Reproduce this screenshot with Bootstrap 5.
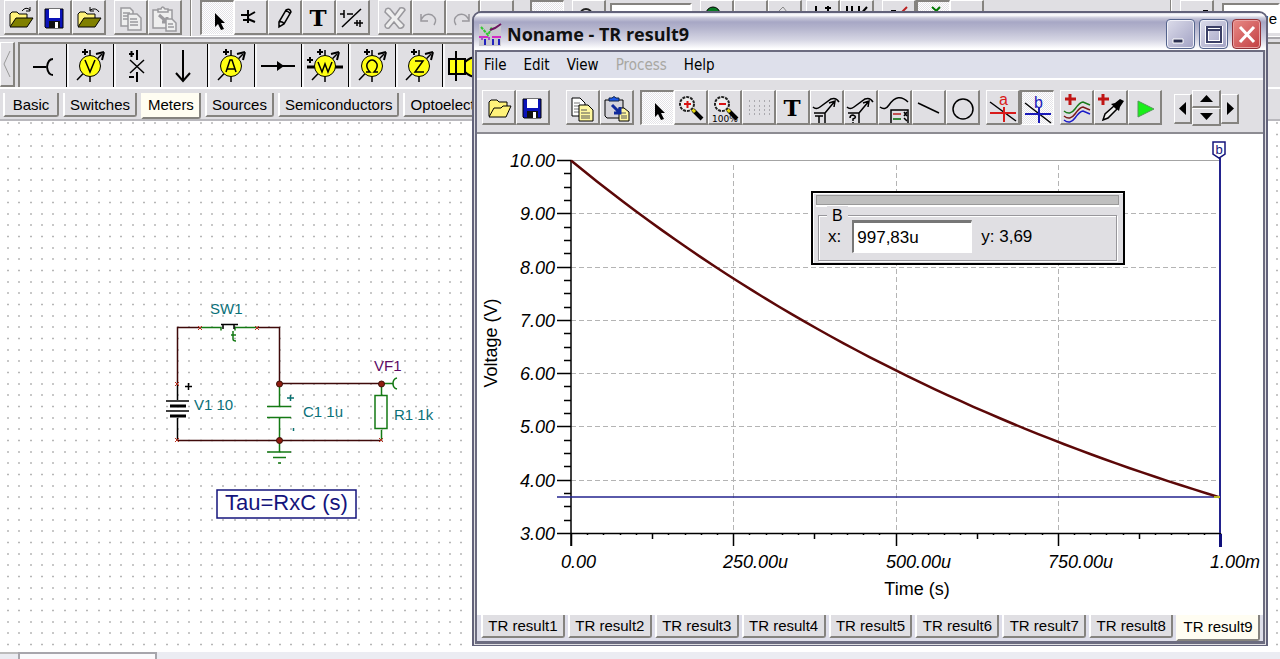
<!DOCTYPE html>
<html lang="en">
<head>
<meta charset="utf-8">
<meta name="viewport" content="width=device-width, initial-scale=1">
<title>Noname - TR result9</title>
<link href="https://cdn.jsdelivr.net/npm/bootstrap@5.3.0/dist/css/bootstrap.min.css" rel="stylesheet">
<script src="https://cdn.jsdelivr.net/npm/bootstrap@5.3.0/dist/js/bootstrap.bundle.min.js" defer></script>
<style>
:root{--face:#e0dfe3;--shade:#85837f;--ui:"Liberation Sans",Arial,sans-serif}
body{font-family:var(--ui);font-size:15px;line-height:18px;color:#000;background:#fff}
button{font:inherit;color:inherit}
svg{display:block;flex-shrink:0}
.desk{background:var(--face)}
.tool{width:34px;height:35px;padding:0;border:1px solid #fff;border-right:2px solid var(--shade);border-bottom:2px solid var(--shade);background:var(--face);overflow:hidden;flex-shrink:0}
.tool svg{width:30px;height:31px}
.tool:disabled{opacity:1}
.tool.pressed{border:1px solid #fff;border-top:2px solid var(--shade);border-left:2px solid var(--shade);background:repeating-conic-gradient(#fff 0 25%,#e4e3e7 0 50%) 0 0/2px 2px}
.toolbar-main{height:37px;padding:0 0 0 4px;border-bottom:1px solid #fff}
.sep{width:2px;background:#fff;border-left:1px solid var(--shade)}
.toolfield{height:30px;border:2px solid var(--shade);border-right-color:#fff;border-bottom-color:#fff;background:#fff;border-radius:0;margin-top:3px;font-size:15px;padding:0 1px 0 4px}
.palette{height:52px;padding-top:3px;border-top:2px solid #aaa9ae;border-bottom:2px solid #fff}
.scroller{width:15px;height:45px;padding:0;border:1px solid #fff;border-right:2px solid var(--shade);border-bottom:2px solid var(--shade);background:var(--face)}
.parts{margin-left:3px;border-top:2px solid var(--shade);border-left:2px solid var(--shade);height:45px;overflow:hidden}
.part{width:47px;padding:0;border:0;border-right:1px solid #000;border-left:2px solid #f7f7f9;background:var(--face);overflow:hidden;flex-shrink:0}
.part.pressed{border-left-color:var(--face)}
.part svg{width:44px;height:44px}
.tabrow{height:32px;padding:4px 0 0 3px;gap:4px;border-bottom:2px solid #b9b8bd}
.tab{border:0;border-left:2px solid #fff;border-right:2px solid var(--shade);border-bottom:2px solid var(--shade);border-radius:0 0 3px 1px;background:var(--face);padding:2px 5px 0;height:24px;min-width:56px;text-align:center;white-space:nowrap;line-height:20px}
.tab.active{background:#fffdf2;border-left-color:#fffdf2;height:26px;padding-top:0}
.sheet{background:#fff}
.statusbar{height:7px;background:#ebecf2}
.stat-a{width:18px;border-top:2px solid #bbb}
.stat-b{width:139px;border:2px solid #a7a6ac;border-bottom:0;background:#fafafc}
.win{left:472px;right:12px;top:11px;bottom:13px;background:var(--face);border:2px solid #62627a;border-bottom-width:1px;border-radius:9px 9px 0 0;overflow:hidden}
.titlebar{height:37px;padding:6px 5px 0 5px;background:linear-gradient(#dcdce8 0,#fff 2px,#c8c8da 5px,#a7a7c5 9px,#b4b4cd 15px,#d6d6e4 27px,#fff 36px)}
.titlebar h1{font:bold 18px/24px "Open Sans",sans-serif;margin:3px 0 0;color:#111}
.cap{width:29px;height:30px;padding:0;border:1px solid #53638c;border-radius:4px;background:linear-gradient(135deg,#dcdcea,#a2a2c4);box-shadow:inset 0 0 0 1px #f0f0f8}
.cap.x{background:linear-gradient(135deg,#e88a86,#c33f42);border-color:#913036;box-shadow:inset 0 0 0 1px #e9a3a3}
.inner{margin:0 1px 1px;border:2px solid #6c6c80;border-bottom-width:3px}
.menus{height:28px;background:#dee0eb;padding:4px 7px 0;gap:17px;border-bottom:2px solid #fff}
.menus a{font:15px/18px "DejaVu Sans Condensed","DejaVu Sans",sans-serif;color:#000;text-decoration:none}
.menus a.disabled{color:#a8a7a2}
.wintools{height:54px;padding:10px 0 0 5px;border-bottom:2px solid #8d8c92}
.group-end{margin-right:6px}
.nudge{width:18px;height:30px;margin-top:4px}
.nudge.first{margin-left:12px}
.nudge svg{width:15px;height:27px}
.spin{width:29px;height:18px}
.spin svg{width:26px;height:15px}
.plot{background:#fff}
.readout{left:42.5%;top:57px;width:314px;height:74px;background:var(--face);border:2px solid #000;box-shadow:inset 1px 1px #fff;padding:2px 3px}
.grip{height:10px;background:#bfbfbf;border:1px solid #999;box-shadow:0 2px #fff;margin-right:1px}
.readout fieldset{border:1px solid #98979c;box-shadow:1px 1px #fff,inset 1px 1px #fff;margin:10px 3px 0 2px;height:46px;padding:0 0 0 9px}
.readout legend{float:none;width:auto;position:absolute;left:14px;top:13px;font-size:16px;line-height:20px;padding:0 5px;margin:0;background:var(--face)}
.readout input{width:120px;height:33px;border:1px solid #fff;border-top:3px solid #777;border-left:2px solid #777;border-radius:0;padding:0 3px;font-size:17px;margin:0 9px 0 11px;background:#fff}
.readout label,.readout output{font-size:17px}
.restabs{height:26px;background:#dedeea;padding:0 3px 0 4px;gap:3px}
.restabs .tab{border-top:0;padding:1px 2px 0;height:23px}
.restabs .tab.active{height:26px;padding-top:0}
.lbl{font:18px var(--ui)}
.tiny{font:9px "DejaVu Sans",sans-serif}
</style>
</head>
<body>
<svg width="0" height="0" class="position-absolute" aria-hidden="true">
 <defs>
  <symbol id="disk" viewBox="0 0 30 31"><path d="M6 7h18v19H7l-1-1z" fill="#0a12b8" stroke="#000"/><path d="M10 7h11v9H10z" fill="#fff"/><path d="M10 19h11v7H10z" fill="#111"/><path d="M16 20h3v6h-3z" fill="#fff"/></symbol>
  <symbol id="ptr" viewBox="0 0 30 31"><path d="M13 10v14l3-3 3 6 3-1-3-6h4z" fill="#000"/></symbol>
  <symbol id="tee" viewBox="0 0 30 31"><text x="15" y="24" text-anchor="middle" font-family="DejaVu Serif" font-weight="bold" font-size="23">T</text></symbol>
  <symbol id="folder" viewBox="0 0 30 31"><path d="M5 24V12l2-2h5l2 2h8v4" fill="#fff27a" stroke="#000"/><path d="M5 25l6-9h17l-6 9z" fill="#808000" stroke="#000"/></symbol>
  <symbol id="meter" viewBox="0 0 44 44"><path d="M21 6v32M8 36L33 10" stroke="#000" stroke-width="1.500"/><path d="M35 8l-2 8M35 8l-8 2M13 8h6M16 5v6" stroke="#000" stroke-width="2" fill="none"/><circle cx="21" cy="22" r="10.500" fill="#ffff12" stroke="#000"/></symbol>
  <symbol id="mag" viewBox="0 0 30 31"><path d="M18 18l9 9" stroke="#000" stroke-width="4"/><path d="M17 17l3 3" stroke="#e7d80f" stroke-width="3"/><circle cx="12" cy="12" r="7" fill="#eee" stroke="#222" stroke-width="2" stroke-dasharray="3 1"/></symbol>
  <pattern id="dots" width="34" height="34" x="7" y="122" patternUnits="userSpaceOnUse"><path d="M0 1h2m9 0h2m10 0h2M0 12.500h2m9 0h2m10 0h2M0 24h2m9 0h2m10 0h2" stroke="#b6b6b6" stroke-width="1.500"/></pattern>
 </defs>
</svg>

<main class="desk vh-100 d-flex flex-column position-relative overflow-hidden">
 <div class="toolbar-main d-flex" role="toolbar" aria-label="Main tools">
  <button class="tool" aria-label="Open"><svg><use href="#folder"/><path d="M17 9q4-5 8-1m0-3v4h-4" fill="none" stroke="#000"/></svg></button>
  <button class="tool" aria-label="Save"><svg><use href="#disk"/></svg></button>
  <button class="tool me-2" aria-label="Open from web"><svg><use href="#folder"/><path d="M26 10q-3-5-9-2m0-3v4h4" fill="none" stroke="#000"/></svg></button>
  <button class="tool" disabled aria-label="Copy"><svg fill="#eee" stroke="#9b9a9e" stroke-width="1.500"><path d="M6 6h9l3 3v15H6z"/><path d="M8 11h7M8 14h5M8 17h5"/><path d="M13 12h9l4 4v12H13z"/><path d="M15 17h7M15 20h8M15 23h8"/></svg></button>
  <button class="tool" disabled aria-label="Paste"><svg fill="#eee" stroke="#9b9a9e" stroke-width="1.500"><path d="M4 8h19v18H4z"/><path d="M9 10V7h3q1-4 4 0h3v3z"/><path d="M10 13l8 7m0-5v5h-5" stroke-width="3"/><path d="M17 17h6l4 4v8H17z"/><path d="M19 22h5M19 25h6"/></svg></button>
  <div class="sep ms-2 me-1"></div>
  <button class="tool pressed ms-1" aria-label="Select"><svg><use href="#ptr"/></svg></button>
  <button class="tool" aria-label="Last component"><svg fill="none" stroke="#000" stroke-width="2"><path d="M6 13h6M8 18h4M13 8v13M13 14l7-4M13 17l7 3"/></svg></button>
  <button class="tool" aria-label="Wire"><svg fill="none" stroke="#000" stroke-width="1.500"><path d="M10 20l7-12q4-2 5 2l-7 12-5 3zM10 20q4-1 5 2M16 9q4 0 5 3"/></svg></button>
  <button class="tool" aria-label="Text"><svg><use href="#tee"/></svg></button>
  <button class="tool me-2" aria-label="Interactive"><svg fill="none" stroke="#000" stroke-width="1.500"><path d="M3 12h4M7 8v8M5 25L24 7M10 12h6M17 21h9M20 18v6M23 18v7"/></svg></button>
  <button class="tool" disabled aria-label="Delete"><svg fill="#eee" stroke="#99989d" stroke-width="1.500"><path d="M7 7q3-2 5 1l4 5 5-7q4-1 5 2l-7 9 6 6q-1 4-5 3l-5-6-5 6q-4 1-4-3l6-7-6-6z"/></svg></button>
  <button class="tool" disabled aria-label="Undo"><svg fill="none" stroke="#99989d" stroke-width="1.500"><path d="M8 18q4-8 11-5 6 4 2 10M8 12v7h7"/></svg></button>
  <button class="tool" disabled aria-label="Redo"><svg fill="none" stroke="#99989d" stroke-width="1.500"><path d="M22 18q-4-8-11-5-6 4-2 10M22 12v7h-7"/></svg></button>
  <button class="tool" aria-label="Zoom"></button>
  <button class="tool pressed ms-3" aria-label="Grid"></button>
  <button class="tool ms-2" aria-label="Find"><svg><circle cx="13" cy="13" r="6" fill="none" stroke="#222" stroke-width="2"/></svg></button>
  <input class="toolfield ms-1" style="width:82px" aria-label="Zoom level">
  <button class="tool ms-2" aria-label="Run"><svg><circle cx="12" cy="12" r="7" fill="#087b22" stroke="#000"/></svg></button>
  <button class="tool" aria-label="Run options"></button>
  <button class="tool" aria-label="Probe"><svg fill="none" stroke="#888"><path d="M9 10l5-5 4 5"/></svg></button>
  <button class="tool ms-1" aria-label="Transient"><svg stroke="#000" stroke-width="2" fill="none"><path d="M9 4v12M18 6h6M21 4v12"/></svg></button>
  <button class="tool" aria-label="Digital"><svg stroke="#000" stroke-width="2" fill="none"><path d="M6 14V4M11 14V4M18 4v10l8-9"/></svg></button>
  <button class="tool ms-2" aria-label="Marker"><svg fill="none" stroke="#b22" stroke-width="2"><path d="M17 12l7-7"/><path d="M8 9h5" stroke="#000"/></svg></button>
  <button class="tool pressed" aria-label="Highlight"><svg fill="none" stroke="#070" stroke-width="2"><path d="M14 4l9 8M22 4l-8 8"/></svg></button>
  <button class="tool" aria-label="Options"></button>
  <div class="sep ms-auto me-2"></div>
  <button class="tool me-2" aria-label="Page"><svg><path d="M22 8h5v4h-5z"/></svg></button>
  <input class="toolfield text-end" style="width:58px" value="ge" aria-label="Page name">
 </div>

 <div class="palette d-flex" role="toolbar" aria-label="Meters">
  <button class="scroller" aria-label="Scroll left"><svg width="12" height="42" fill="none" stroke="#999"><path d="M9 8L3 21l6 13"/></svg></button>
  <div class="parts d-flex flex-grow-1">
   <button class="part pressed" aria-label="Voltage pin"><svg fill="none" stroke="#000" stroke-width="2"><path d="M11 23h13M31 15q-5 0-6 8 1 8 6 8"/></svg></button>
   <button class="part" aria-label="Voltmeter"><svg><use href="#meter"/><path d="M16 16l5 12 5-12" fill="none" stroke="#000" stroke-width="1.500"/></svg></button>
   <button class="part" aria-label="Open circuit meter"><svg stroke="#000" stroke-width="2"><path d="M21 6v10M21 28v10M13 10h5M15.500 7v6M13 33h5"/><path d="M14 16l14 13M28 16L14 29" stroke-width="1.500"/></svg></button>
   <button class="part" aria-label="Voltage arrow"><svg fill="none" stroke="#000" stroke-width="2"><path d="M20 6v31M13 29l7 8 7-8"/></svg></button>
   <button class="part" aria-label="Ammeter"><svg><use href="#meter"/><path d="M16 28l4-12h2l4 12M17 25h8" fill="none" stroke="#000" stroke-width="1.500"/></svg></button>
   <button class="part" aria-label="Current arrow"><svg><path d="M4 22h34" stroke="#000" stroke-width="2"/><path d="M20 17l7 5-7 5z"/></svg></button>
   <button class="part" aria-label="Power meter"><svg><path d="M3 23h36" stroke="#000" stroke-width="3"/><path d="M3 16h6M6 13v6" stroke="#000" stroke-width="2"/><use href="#meter"/><path d="M14 18l4 10 3-8 3 8 4-10" fill="none" stroke="#000" stroke-width="1.500"/></svg></button>
   <button class="part" aria-label="Ohmmeter"><svg><use href="#meter"/><path d="M15 28h4q-4-4-3-8 2-4 5-4t5 4q1 4-3 8h4" fill="none" stroke="#000" stroke-width="1.500"/></svg></button>
   <button class="part" aria-label="Impedance meter"><svg><use href="#meter"/><path d="M17 17h8l-8 11h9" fill="none" stroke="#000" stroke-width="1.500"/></svg></button>
   <button class="part" aria-label="Speaker"><svg fill="#ffff12" stroke="#000" stroke-width="2"><path d="M11 7v30M4 15h16v15H4zM20 18q5-5 12-5v20q-7 0-12-5z"/></svg></button>
  </div>
 </div>

 <div class="tabrow d-flex" role="tablist" aria-label="Component groups">
  <button class="tab" role="tab">Basic</button><button class="tab" role="tab">Switches</button><button class="tab active" role="tab" aria-selected="true">Meters</button><button class="tab" role="tab">Sources</button><button class="tab" role="tab">Semiconductors</button><button class="tab" role="tab">Optoelectronics</button>
 </div>

 <section class="sheet flex-grow-1 overflow-hidden" aria-label="Schematic">
  <svg width="100%" height="100%" fill="none">
   <g transform="translate(0 -121)">
    <rect width="100%" height="100%" y="121" fill="url(#dots)"/>
    <g stroke="#3f0a0a" stroke-width="1.500"><path d="M177.500 383V327.500H200M257 327.500H279.500V384M279.500 383.500H381M177.500 440.500H381"/></g>
    <g stroke="#000" stroke-width="1.500"><path d="M177.500 384v16M166 401h23M166 411h23M177.500 418v22M185 386.500h7M188.500 383v7"/><path d="M170 406h16M170 416h16" stroke-width="3"/></g>
    <g stroke="#147a14" stroke-width="1.500"><path d="M201 327.500h20v3M257 327.500h-22v3M279.500 384v22M267 406.500h24M267 417.500h24M279.500 418v34M267 452h24M273 457.500h13M278 463h3M381.500 384v11M381.500 430v10M375 395.500h12v33h-12zM382 383.500h11M397 378q-4 1-4 5.500t4 5.500"/><path d="M233 331v8q0 2 3 2M231 335h5" stroke-width="1.500"/></g>
    <path d="M221 324.500h17M223 325v4M234 325v4" stroke="#000" stroke-width="1.500"/>
    <path d="M287 398h7M290.500 395v6M293.500 428v3" stroke="#087070" stroke-width="1.500"/>
    <g stroke="#b8301f"><path d="M198 326l4 4m0-4l-4 4M255 326l4 4m0-4l-4 4M175 382l4 4m0-4l-4 4M175 438l4 4m0-4l-4 4M379 438l4 4m0-4l-4 4"/></g>
    <g fill="#8f1c10" stroke="#3c1008"><circle cx="279.500" cy="384" r="3"/><circle cx="381.500" cy="384" r="3"/><circle cx="279.500" cy="440.500" r="3"/></g>
    <g fill="#0a7078" font-family="Liberation Sans" font-size="15"><text x="210" y="314">SW1</text><text x="194" y="410">V1 10</text><text x="303" y="417">C1 1u</text><text x="394" y="420">R1 1k</text><text x="374" y="371" fill="#5c0a64">VF1</text></g>
    <rect x="217" y="490" width="139" height="28" fill="#fff" stroke="#14147c" stroke-width="1.500"/>
    <text x="225" y="510" fill="#14147c" font-family="Liberation Sans" font-size="22">Tau=RxC (s)</text>
   </g>
  </svg>
 </section>
 <footer class="statusbar d-flex"><div class="stat-a"></div><div class="stat-b"></div></footer>

 <section class="win position-absolute d-flex flex-column" aria-label="Diagram window">
  <header class="titlebar d-flex">
   <svg width="24" height="24" class="me-1 mt-1" fill="none" stroke-width="2"><path d="M0 1h22v22H0z" fill="#c8c7ce"/><path d="M0 14h9M13 14h9" stroke="#d32ac4"/><path d="M2 4l7 8 4-8" stroke="#32c832" stroke-dasharray="3 1"/><path d="M11 7l5-2 6-4" stroke="#6d1460"/><path d="M6 16v6M14 16v6M20 16v6" stroke="#2222bd"/><path d="M3 14v3M10 14v3" stroke="#a44fd0"/></svg>
   <h1>Noname - TR result9</h1>
   <div class="ms-auto d-flex gap-1">
    <button class="cap" aria-label="Minimise"><svg width="27" height="28"><path d="M6 19h10v4H6z" fill="#2b2f50" stroke="#fff"/></svg></button>
    <button class="cap" aria-label="Maximise"><svg width="27" height="28" fill="none"><path d="M7 8h14v14H7z" stroke="#fff" stroke-width="4"/><path d="M7 7h14v15H7zM7 10h14" stroke="#3b3f66" stroke-width="2"/></svg></button>
    <button class="cap x" aria-label="Close"><svg width="27" height="28"><path d="M7 7l14 15M21 7L7 22" stroke="#fff" stroke-width="3"/></svg></button>
   </div>
  </header>
  <div class="inner flex-grow-1 d-flex flex-column overflow-hidden">
   <nav class="menus d-flex" aria-label="Menu"><a href="#">File</a><a href="#">Edit</a><a href="#">View</a><a href="#" class="disabled" aria-disabled="true">Process</a><a href="#">Help</a></nav>
   <div class="wintools d-flex" role="toolbar" aria-label="Diagram tools">
    <button class="tool" aria-label="Open"><svg fill="#fff27a" stroke="#000"><path d="M6 24V10l2-2h6l2 2h8v5"/><path d="M6 25l5-9h7l2-2h8l-5 11z"/></svg></button>
    <button class="tool me-3" aria-label="Save"><svg><use href="#disk"/></svg></button>
    <button class="tool" aria-label="Copy"><svg stroke="#000"><path d="M5 6h8l5 5v13H5z" fill="#fff"/><path d="M7 11h6M7 14h5M7 17h5M7 20h5" stroke="#777"/><path d="M12 13h9l5 5v11H12z" fill="#fff8a0"/><path d="M14 18h6M14 21h9M14 24h9M14 26h9" stroke="#555"/></svg></button>
    <button class="tool group-end" aria-label="Paste"><svg stroke="#000"><path d="M4 8h18v18H6l-2-2z" fill="#d4d3da"/><path d="M8 9V6h3q2-3 4 0h3v3z" fill="#1c58e8" stroke="#124"/><path d="M18 16h5l5 4v9H18z" fill="#fff8a0"/><path d="M20 21h5M20 24h6M20 26h6" stroke="#555"/><path d="M11 13l8 8m0-6v6h-6" stroke="#102a9c" stroke-width="3" fill="none"/></svg></button>
    <button class="tool pressed" aria-label="Select"><svg><use href="#ptr"/></svg></button>
    <button class="tool" aria-label="Zoom in"><svg><use href="#mag"/><path d="M9 12h7M12.500 9v7" stroke="#d81212" stroke-width="2"/></svg></button>
    <button class="tool" aria-label="Zoom 100%"><svg><use href="#mag" x="1"/><path d="M10 12h7" stroke="#d81212" stroke-width="2"/><text x="3" y="30" class="tiny">100%</text></svg></button>
    <button class="tool" aria-label="Grid"><svg stroke="#aaa9ae" stroke-width="2" stroke-dasharray="1 4"><path d="M6 9h21M6 14h21M6 18h21M6 22h21"/></svg></button>
    <button class="tool" aria-label="Text"><svg><use href="#tee"/></svg></button>
    <button class="tool" aria-label="Curve label"><svg fill="none" stroke="#000" stroke-width="1.500"><path d="M2 15q3 3 7 0L20 7q5-2 8 3M14 21l10-12m-6 2l6-2-1 6M3 21h11v10M4 24h8M8 24v7"/></svg></button>
    <button class="tool" aria-label="Curve query"><svg fill="none" stroke="#000" stroke-width="1.500"><path d="M2 15q3 3 7 0L20 7q5-2 8 3M14 21l10-12m-6 2l6-2-1 6M3 21h11v10M5 26q0-3 3-3 5 2 0 4v2M8 30v1"/></svg></button>
    <button class="tool" aria-label="Legend"><svg fill="none" stroke="#000" stroke-width="1.500"><path d="M1 15q5 4 9-2 9-13 19-3M12 31V18h17v13"/><path d="M14 22h8" stroke="#b22"/><path d="M14 27h8" stroke="#060"/><path d="M25 20l3 4m0-4l-3 4M25 26l3 3"/></svg></button>
    <button class="tool" aria-label="Line"><svg stroke="#000" stroke-width="1.500"><path d="M5 11l21 10"/></svg></button>
    <button class="tool group-end" aria-label="Ellipse"><svg fill="none" stroke="#000" stroke-width="1.500"><circle cx="16" cy="17" r="10"/></svg></button>
    <button class="tool" aria-label="Cursor a"><svg fill="none" stroke-width="2"><path d="M3 10l26 19" stroke="#000" stroke-width="1.500"/><path d="M3 21h26M17 15v15" stroke="#d81a1a"/><text x="12" y="13" font-size="16" fill="#d81a1a">a</text></svg></button>
    <button class="tool pressed group-end" aria-label="Cursor b"><svg fill="none" stroke-width="2"><path d="M3 10l26 20" stroke="#000" stroke-width="1.500"/><path d="M3 21h26M17 15v15" stroke="#1a1ab8"/><text x="12" y="15" font-size="16" fill="#1a1ab8">b</text></svg></button>
    <button class="tool" aria-label="Add curves"><svg fill="none" stroke-width="1.500"><path d="M4 7h11M9 2v11" stroke="#c01515" stroke-width="3"/><path d="M3 19q6 5 11-2t8-7l7 3" stroke="#1a7a1a"/><path d="M3 24q6 5 11-2t8-7l7 3" stroke="#7a1a1a"/><path d="M3 28q6 5 11-2t8-7l7 3" stroke="#1a1ac8"/></svg></button>
    <button class="tool" aria-label="Pick value"><svg><path d="M3 7h11M8 2v11" stroke="#c01515" stroke-width="3"/><path d="M8 28l2-6 9-8 3 3-9 9z" fill="#eee" stroke="#000" stroke-width="1.500"/><path d="M16 12l4-1 5-4 4 2-4 6-1 4z"/></svg></button>
    <button class="tool" aria-label="Run"><svg><path d="M9 9l16 8-16 8z" fill="#19ef19" stroke="#55995a"/></svg></button>
    <button class="tool nudge first" aria-label="Left"><svg><path d="M11 7v13l-7-6.500z"/></svg></button>
    <div class="d-flex flex-column"><button class="tool spin" aria-label="Up"><svg><path d="M7 11h13L13.500 4z"/></svg></button><button class="tool spin" aria-label="Down"><svg><path d="M7 4h13l-6.500 7z"/></svg></button></div>
    <button class="tool nudge" aria-label="Right"><svg><path d="M5 7v13l7-6.500z"/></svg></button>
   </div>
   <div class="plot flex-grow-1 position-relative overflow-hidden">
    <svg class="position-absolute w-100 h-100" id="chart" viewBox="477 134 786 481" fill="none" role="img" aria-label="Voltage over time"></svg>
    <div class="readout position-absolute">
     <div class="grip"></div>
     <fieldset><legend>B</legend><div class="d-flex align-items-center pt-1"><label for="cursorx">x:</label><input id="cursorx" value="997,83u"><output>y: 3,69</output></div></fieldset>
    </div>
   </div>
   <div class="restabs d-flex" role="tablist" aria-label="Results">
    <button class="tab flex-fill" role="tab">TR result1</button><button class="tab flex-fill" role="tab">TR result2</button><button class="tab flex-fill" role="tab">TR result3</button><button class="tab flex-fill" role="tab">TR result4</button><button class="tab flex-fill" role="tab">TR result5</button><button class="tab flex-fill" role="tab">TR result6</button><button class="tab flex-fill" role="tab">TR result7</button><button class="tab flex-fill" role="tab">TR result8</button><button class="tab flex-fill active" role="tab" aria-selected="true">TR result9</button>
   </div>
  </div>
 </section>
</main>
<script>
// Builds the plot: grid, ticks, labels, the discharge curve and cursor b.
const X0 = 571, X1 = 1220, Y0 = 160, Y1 = 533;
const py = v => Math.round(Y0 + (10 - v) * (Y1 - Y0) / 7) + .5;
const px = t => Math.round(X0 + t * (X1 - X0)) + .5;
let grid = '', ticks = '', labels = '';
for (let i = 0; i <= 28; i++) {
  const v = 3 + i / 4, y = py(v), major = i % 4 === 0;
  ticks += `M${major ? 557 : 564} ${y}H${X0}`;
  if (major) {
    labels += `<text x="555" y="${y + 6}" text-anchor="end">${v.toFixed(2)}</text>`;
    if (v > 3 && v < 10) grid += `M${X0} ${y}H${X1}`;
  }
}
const xt = ['0.00', '250.00u', '500.00u', '750.00u', '1.00m'];
for (let i = 0; i <= 40; i++) {
  const x = px(i / 40);
  ticks += `M${x} ${Y1}V${i % 10 === 0 ? 546 : i % 5 === 0 ? 539 : 535}`;
  if (i % 10 === 0) {
    labels += `<text x="${Math.round(x) - 11}" y="568">${xt[i / 10]}</text>`;
    if (i > 0 && i < 40) grid += `M${x} ${Y0 + 5}V${Y1}`;
  }
}
let curve = '';
for (let t = 0; t <= 1.001; t += .02) curve += `${t ? 'L' : 'M'}${X0 + t * (X1 - X0)} ${Y0 + .5 + 533 * (1 - Math.exp(-t))}`;
document.getElementById('chart').innerHTML = `
<path d="${grid}" stroke="#b4b4b4" stroke-dasharray="5 3"/>
<path d="M571 160.500H1220" stroke="#a4a4a4"/>
<path d="${ticks}" stroke="#000" stroke-width="1.500"/>
<path d="M571 160V546M571 533.500H1220" stroke="#000" stroke-width="1.500"/>
<path d="M557 497H1220" stroke="#23238e" stroke-width="1.500"/>
<path d="${curve}" stroke="#5c0808" stroke-width="2.500"/>
<path d="M1220 158V533" stroke="#23238e" stroke-width="2"/><path d="M1220.500 534V547" stroke="#10107c" stroke-width="3"/>
<path d="M1214 497h6" stroke="#b5b520" stroke-width="2"/>
<path d="M1213 142h12v12l-6 4-6-4z" fill="#fff" stroke="#14147c" stroke-width="1.500"/>
<text x="1219" y="154" text-anchor="middle" fill="#14147c" font-family="Liberation Sans" font-size="13">b</text>
<g fill="#000" class="lbl" style="font-style:italic">${labels}</g>
<g fill="#000" class="lbl"><text x="917" y="595" text-anchor="middle">Time (s)</text><text transform="translate(497 343) rotate(-90)" text-anchor="middle">Voltage (V)</text></g>`;
</script>
</body>
</html>
